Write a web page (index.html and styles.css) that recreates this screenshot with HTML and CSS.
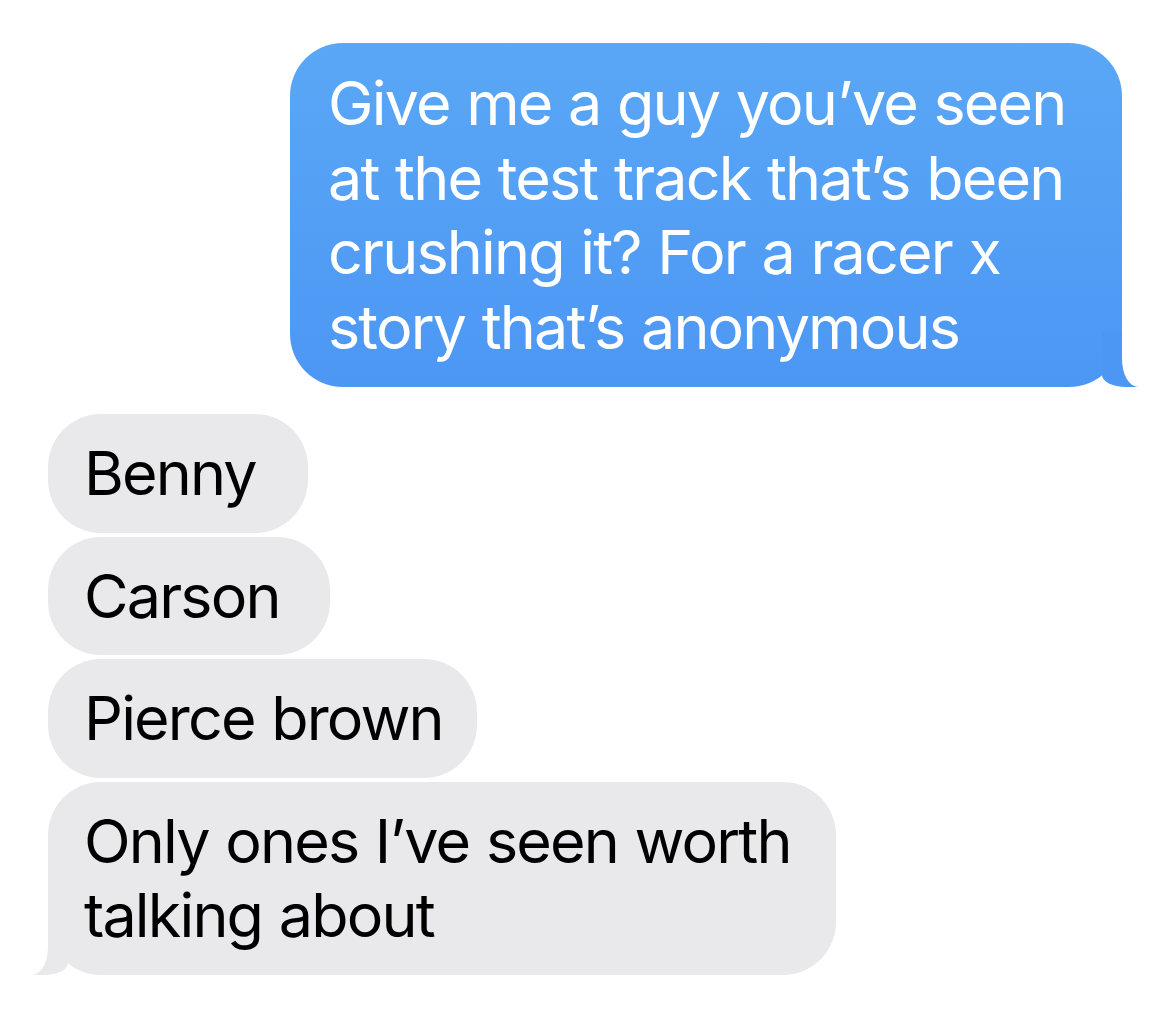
FILE: index.html
```html
<!DOCTYPE html>
<html lang="en">
<head>
<meta charset="utf-8">
<title>Messages</title>
<link rel="stylesheet" href="styles.css">
</head>
<body>
<main class="thread">
  <div class="bubble sent tail">Give me a guy you’ve seen<br>at the test track that’s been<br>crushing it? For a racer x<br>story that’s anonymous</div>
  <div class="group">
    <div class="bubble recv w-benny">Benny</div>
    <div class="bubble recv w-carson">Carson</div>
    <div class="bubble recv w-pierce">Pierce brown</div>
    <div class="bubble recv tail w-only">Only ones I’ve seen worth<br>talking about</div>
  </div>
</main>
</body>
</html>
```
FILE: styles.css
```css
* { box-sizing: border-box; }
html, body { margin: 0; padding: 0; background: #ffffff; }
body {
  font-family: Inter, "Noto Sans", "Liberation Sans", sans-serif;
  width: 1170px;
  height: 1025px;
  overflow: hidden;
}
.thread {
  display: flex;
  flex-direction: column;
  padding: 43px 48px 0 48px;
  gap: 27px;
}
.group {
  display: flex;
  flex-direction: column;
  align-items: flex-start;
  gap: 4px;
}
.bubble {
  position: relative;
  font-size: 61px;
  line-height: 74.5px;
  letter-spacing: -0.03em;
  word-spacing: 0.02em;
  padding: 22px 40px 22px 36px;
  border-radius: 53px;
  white-space: nowrap;
}
.sent {
  align-self: flex-end;
  width: 832px;
  padding: 23px 40px 23px 38px;
  color: #ffffff;
  background: linear-gradient(#5aa7f6, #4c97f4);
}
.recv {
  color: #000000;
  background: #e9e9eb;
}
.w-benny { width: 260px; }
.w-carson { width: 282px; }
.w-pierce { width: 429px; }
.w-only { width: 788px; }

.sent.tail::before {
  content: "";
  position: absolute;
  bottom: 0;
  right: -16px;
  width: 36px;
  height: 56px;
  background: #4c97f4;
  border-bottom-left-radius: 24px 12px;
}
.sent.tail::after {
  content: "";
  position: absolute;
  bottom: 0;
  left: 100%;
  width: 40px;
  height: 56px;
  background: #ffffff;
  border-bottom-left-radius: 16px 28px;
}
.recv.tail::before {
  content: "";
  position: absolute;
  bottom: 0;
  left: -16px;
  width: 36px;
  height: 56px;
  background: #e9e9eb;
  border-bottom-right-radius: 24px 12px;
}
.recv.tail::after {
  content: "";
  position: absolute;
  bottom: 0;
  right: 100%;
  width: 40px;
  height: 56px;
  background: #ffffff;
  border-bottom-right-radius: 16px 28px;
}
```
